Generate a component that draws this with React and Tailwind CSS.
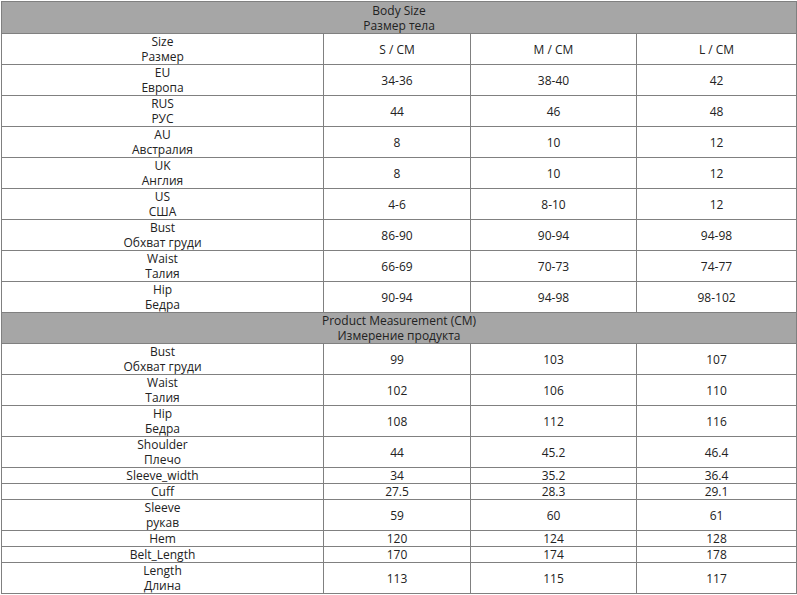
const bodyRows = [
  ['EU', 'Европа', '34-36', '38-40', '42'],
  ['RUS', 'РУС', '44', '46', '48'],
  ['AU', 'Австралия', '8', '10', '12'],
  ['UK', 'Англия', '8', '10', '12'],
  ['US', 'США', '4-6', '8-10', '12'],
  ['Bust', 'Обхват груди', '86-90', '90-94', '94-98'],
  ['Waist', 'Талия', '66-69', '70-73', '74-77'],
  ['Hip', 'Бедра', '90-94', '94-98', '98-102'],
];

const productRows = [
  ['Bust', 'Обхват груди', '99', '103', '107'],
  ['Waist', 'Талия', '102', '106', '110'],
  ['Hip', 'Бедра', '108', '112', '116'],
  ['Shoulder', 'Плечо', '44', '45.2', '46.4'],
  ['Sleeve_width', null, '34', '35.2', '36.4'],
  ['Cuff', null, '27.5', '28.3', '29.1'],
  ['Sleeve', 'рукав', '59', '60', '61'],
  ['Hem', null, '120', '124', '128'],
  ['Belt_Length', null, '170', '174', '178'],
  ['Length', 'Длина', '113', '115', '117'],
];

const cell = 'border border-[#808080] p-0 text-center align-middle font-normal';

function HeaderRow({ en, ru, first }) {
  return (
    <tr>
      <td colSpan={4} className={`${cell} bg-[#a6a6a6] ${first ? 'pt-px' : ''}`}>
        {en}
        <br />
        {ru}
      </td>
    </tr>
  );
}

function Row({ row }) {
  const [en, ru, s, m, l] = row;
  return (
    <tr>
      <td className={cell}>
        {en}
        {ru && <br />}
        {ru}
      </td>
      <td className={cell}>{s}</td>
      <td className={cell}>{m}</td>
      <td className={cell}>{l}</td>
    </tr>
  );
}

export default function App() {
  return (
    <div className="h-[595px] w-[797px] bg-white pl-px pt-px font-['Open_Sans',sans-serif] text-[12px] leading-[15px] text-[#222]">
      <table className="w-[795px] table-fixed border-collapse">
        <colgroup>
          <col className="w-[322px]" />
          <col className="w-[147px]" />
          <col className="w-[166px]" />
          <col className="w-[160px]" />
        </colgroup>
        <tbody>
          <HeaderRow en="Body Size" ru="Размер тела" first />
          <Row row={['Size', 'Размер', 'S / CM', 'M / CM', 'L / CM']} />
          {bodyRows.map((r, i) => (
            <Row key={i} row={r} />
          ))}
          <HeaderRow en="Product Measurement (CM)" ru="Измерение продукта" />
          {productRows.map((r, i) => (
            <Row key={i} row={r} />
          ))}
        </tbody>
      </table>
    </div>
  );
}
